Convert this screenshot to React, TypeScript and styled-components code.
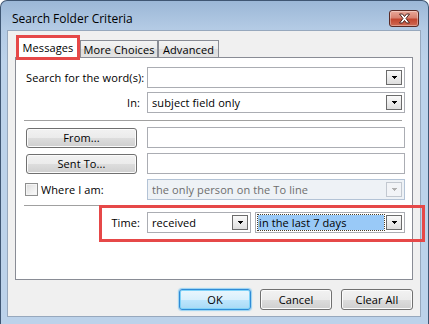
import styled, { createGlobalStyle } from "styled-components";

const GlobalStyle = createGlobalStyle`
  html, body {
    margin: 0;
    padding: 0;
    background: #fff;
  }
  body {
    font-family: "Open Sans", "Liberation Sans", sans-serif;
    font-size: 11px;
    letter-spacing: 0.1px;
    color: #000;
  }
`;

const Window = styled.div`
  box-sizing: border-box;
  width: 429px;
  height: 324px;
  display: flex;
  flex-direction: column;
  border: 1px solid #3f5673;
  border-bottom: none;
  border-radius: 7px 7px 0 0;
  background: linear-gradient(180deg, #9bb7d7 0px, #b4cbe5 28px, #bcd2ea 60px, #bcd2ea 100%);
  overflow: hidden;
`;

const TitleBar = styled.div`
  height: 29px;
  box-sizing: border-box;
  padding: 6px 9px 0 11px;
  display: flex;
  align-items: center;
  justify-content: space-between;
`;

const Title = styled.span`
  font-size: 12px;
  letter-spacing: 0;
  color: #000;
`;

const CloseButton = styled.div`
  box-sizing: border-box;
  width: 30px;
  height: 17px;
  border: 1px solid #5a2a25;
  border-radius: 3px;
  background: linear-gradient(180deg, #e9a899 0%, #d88271 45%, #c2462f 55%, #cf6b55 100%);
  box-shadow: inset 0 0 0 1px rgba(255, 255, 255, 0.35);
  display: flex;
  align-items: center;
  justify-content: center;
`;

const Client = styled.div`
  flex: 1;
  margin: 0 7px 7px 6px;
  box-sizing: border-box;
  border: 1px solid #97a8bd;
  background: #f0f0f0;
  padding: 4px 7px 0 7px;
  display: flex;
  flex-direction: column;
`;

const TabStrip = styled.div`
  height: 22px;
  display: flex;
  align-items: flex-end;
  padding-left: 3px;
`;

const Tab = styled.div<{ $selected?: boolean; $w: number; $gap?: number }>`
  box-sizing: border-box;
  width: ${(p) => p.$w}px;
  margin-left: ${(p) => p.$gap ?? 0}px;
  height: ${(p) => (p.$selected ? 21 : 17)}px;
  margin-bottom: ${(p) => (p.$selected ? -1 : 0)}px;
  border: 1px solid #898c95;
  border-bottom: none;
  background: ${(p) =>
    p.$selected ? "#fff" : "linear-gradient(180deg, #f3f3f3 0%, #ebebeb 50%, #dddddd 51%, #e3e3e3 100%)"};
  display: flex;
  align-items: center;
  justify-content: center;
  white-space: nowrap;
  position: relative;
  z-index: ${(p) => (p.$selected ? 2 : 1)};
  padding-bottom: ${(p) => (p.$selected ? 2 : 0)}px;
  outline: ${(p) => (p.$selected ? "3px solid #e64848" : "none")};
  outline-offset: -1px;
`;

const Panel = styled.div`
  box-sizing: border-box;
  height: 223px;
  border: 1px solid #898c95;
  background: #fff;
  padding: 9px 7px 0 10px;
  display: flex;
  flex-direction: column;
`;

const FormGrid = styled.div<{ $gap: number; $top?: number }>`
  display: grid;
  grid-template-columns: 114px 258px;
  grid-auto-rows: 21px;
  column-gap: 7px;
  row-gap: ${(p) => p.$gap}px;
  margin-top: ${(p) => p.$top ?? 0}px;
`;

const Label = styled.div<{ $right?: boolean }>`
  display: flex;
  align-items: center;
  justify-content: ${(p) => (p.$right ? "flex-end" : "flex-start")};
  white-space: nowrap;
`;

const Separator = styled.div<{ $top: number }>`
  height: 1px;
  background: #a0a0a0;
  margin: ${(p) => p.$top}px 3px 0 -2px;
`;

const Combo = styled.div<{ $disabled?: boolean; $w?: number }>`
  box-sizing: border-box;
  height: 21px;
  width: ${(p) => (p.$w ? `${p.$w}px` : "100%")};
  display: flex;
  align-items: center;
  padding: 0 2px 0 4px;
  border: 1px solid ${(p) => (p.$disabled ? "#b3c3d6" : "#abadb3")};
  background: ${(p) => (p.$disabled ? "#eef2f6" : "#fff")};
  color: ${(p) => (p.$disabled ? "#6d6d6d" : "#000")};
`;

const ComboText = styled.span<{ $active?: boolean }>`
  flex: 1;
  min-width: 0;
  white-space: nowrap;
  overflow: hidden;
  line-height: 15px;
  height: 15px;
  margin-right: ${(p) => (p.$active ? 2 : 0)}px;
  padding-left: ${(p) => (p.$active ? 1 : 0)}px;
  margin-left: ${(p) => (p.$active ? -2 : 0)}px;
  background: ${(p) => (p.$active ? "#99c9f7" : "transparent")};
  outline: ${(p) => (p.$active ? "1px dotted #4a3f2a" : "none")};
`;

const DropButton = styled.span<{ $disabled?: boolean }>`
  box-sizing: border-box;
  width: 16px;
  height: 15px;
  flex: none;
  border: 1px solid ${(p) => (p.$disabled ? "#c2c8d0" : "#6b6b6b")};
  background: ${(p) =>
    p.$disabled ? "#f2f4f7" : "linear-gradient(180deg, #fafafa 0%, #ececec 50%, #dedede 100%)"};
  display: flex;
  align-items: center;
  justify-content: center;
  color: ${(p) => (p.$disabled ? "#b0b0b0" : "#000")};
`;

const TextBox = styled.div`
  box-sizing: border-box;
  height: 21px;
  border: 1px solid #abadb3;
  background: #fff;
`;

const PushButton = styled.div<{ $default?: boolean; $w: number; $h: number }>`
  box-sizing: border-box;
  width: ${(p) => p.$w}px;
  height: ${(p) => p.$h}px;
  align-self: center;
  border: 1px solid ${(p) => (p.$default ? "#2f8bd6" : "#707070")};
  border-radius: 3px;
  background: ${(p) =>
    p.$default
      ? "linear-gradient(180deg, #eaf6fd 0%, #d9f0fc 50%, #bee6fd 51%, #a7d9f5 100%)"
      : "linear-gradient(180deg, #f2f2f2 0%, #ebebeb 50%, #dddddd 51%, #cfcfcf 100%)"};
  box-shadow: ${(p) =>
    p.$default ? "inset 0 0 0 1px #7fd2f8, 0 0 1px 1px rgba(64, 180, 245, 0.5)" : "inset 0 0 0 1px #fbfbfb"};
  display: flex;
  align-items: center;
  justify-content: center;
`;

const CheckRow = styled.div`
  display: flex;
  align-items: center;
  gap: 3px;
  white-space: nowrap;
`;

const CheckBox = styled.span`
  box-sizing: border-box;
  width: 13px;
  height: 13px;
  margin-left: -1px;
  border: 1px solid #8e8f8f;
  background: linear-gradient(135deg, #dcdcdc 0%, #f0f0f0 60%, #fbfbfb 100%);
  box-shadow: inset 0 0 0 1px #f4f4f4;
`;

const Highlight = styled.div`
  box-sizing: border-box;
  width: 326px;
  margin: -1px 0 0 73px;
  border: 3px solid #e64848;
  padding: 4px 0 6px 0;
  display: flex;
  align-items: center;
  gap: 4px;
  position: relative;
`;

const TimeLabel = styled.div`
  width: 38px;
  margin-right: 3px;
  text-align: right;
`;

const ButtonRow = styled.div`
  display: flex;
  justify-content: flex-end;
  gap: 9px;
  margin-top: 9px;
`;

const Arrow = () => (
  <svg width="5" height="3" viewBox="0 0 5 3" shapeRendering="crispEdges">
    <path d="M0 0h5v1h-1v1h-1v1h-1v-1h-1v-1h-1z" fill="currentColor" />
  </svg>
);

const CloseGlyph = () => (
  <svg width="13" height="11" viewBox="0 0 13 11">
    <path
      d="M1.5 1h3l2 2.5 2-2.5h3l-3.5 4.5 3.5 4.5h-3l-2-2.5-2 2.5h-3l3.5-4.5z"
      fill="#fff"
      stroke="#4a2520"
      strokeWidth="1"
      strokeLinejoin="round"
    />
  </svg>
);

const ComboBox = ({
  text,
  disabled,
  active,
  w,
}: {
  text: string;
  disabled?: boolean;
  active?: boolean;
  w?: number;
}) => (
  <Combo $disabled={disabled} $w={w}>
    <ComboText $active={active}>{text}</ComboText>
    <DropButton $disabled={disabled}>
      <Arrow />
    </DropButton>
  </Combo>
);

export default function App() {
  return (
    <>
      <GlobalStyle />
      <Window>
        <TitleBar>
          <Title>Search Folder Criteria</Title>
          <CloseButton>
            <CloseGlyph />
          </CloseButton>
        </TitleBar>
        <Client>
          <TabStrip>
            <Tab $selected $w={60}>
              Messages
            </Tab>
            <Tab $w={78} $gap={2}>
              More Choices
            </Tab>
            <Tab $w={61}>Advanced</Tab>
          </TabStrip>
          <Panel>
            <FormGrid $gap={4}>
              <Label>Search for the word(s):</Label>
              <ComboBox text="" />
              <Label $right>In:</Label>
              <ComboBox text="subject field only" />
            </FormGrid>
            <Separator $top={7} />
            <FormGrid $gap={5} $top={6}>
              <PushButton $w={111} $h={20}>
                From...
              </PushButton>
              <TextBox />
              <PushButton $w={111} $h={20}>
                Sent To...
              </PushButton>
              <TextBox />
              <CheckRow>
                <CheckBox />
                <span>Where I am:</span>
              </CheckRow>
              <ComboBox text="the only person on the To line" disabled />
            </FormGrid>
            <Separator $top={5} />
            <Highlight>
              <TimeLabel>Time:</TimeLabel>
              <ComboBox text="received" w={104} />
              <ComboBox text="in the last 7 days" w={150} active />
            </Highlight>
          </Panel>
          <ButtonRow>
            <PushButton $default $w={72} $h={21}>
              OK
            </PushButton>
            <PushButton $w={72} $h={21}>
              Cancel
            </PushButton>
            <PushButton $w={72} $h={21}>
              Clear All
            </PushButton>
          </ButtonRow>
        </Client>
      </Window>
    </>
  );
}
